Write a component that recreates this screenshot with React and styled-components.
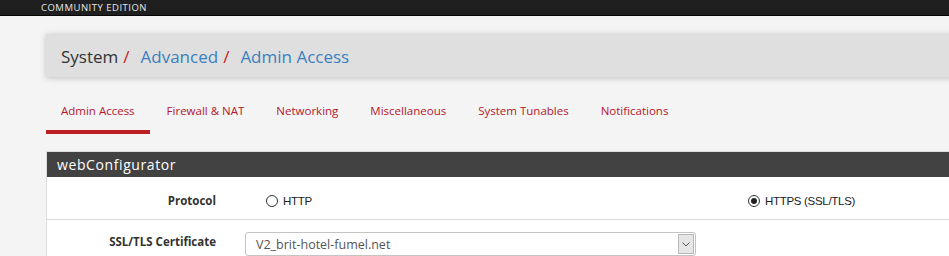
import React from "react";
import styled, { createGlobalStyle } from "styled-components";

const GlobalStyle = createGlobalStyle`
  html, body {
    margin: 0;
    padding: 0;
    background: #f4f4f4;
    overflow: hidden;
    font-family: "Open Sans", "Noto Sans", sans-serif;
  }
`;

const TopBar = styled.div`
  height: 15px;
  background: #1f1f1f;
  border-bottom: 1px solid #050505;
  display: flex;
  align-items: center;
  padding-left: 41px;
`;

const Edition = styled.span`
  color: #e6e6e6;
  font-size: 9.5px;
  letter-spacing: 0.5px;
  line-height: 15px;
`;

const Container = styled.div`
  margin-left: 46px;
  width: 1120px;
`;

const Breadcrumb = styled.div`
  margin-top: 18px;
  height: 43px;
  background: #dfdfdf;
  box-shadow: 0 1px 6px rgba(0, 0, 0, 0.22);
  display: flex;
  align-items: center;
  padding-left: 15px;
  padding-top: 1px;
  box-sizing: border-box;
  font-size: 17px;
  color: #333;
`;

const Crumb = styled.span`
  color: ${(p) => (p.$link ? "#3a7fc0" : "#333")};
`;

const Slash = styled.span`
  color: #c52026;
  margin: 0 11px 0 5px;
`;

const Tabs = styled.div`
  display: flex;
  gap: 2px;
  margin-top: 21px;
`;

const Tab = styled.div`
  box-sizing: border-box;
  padding: 5px 15px 0;
  height: 36px;
  line-height: 16px;
  font-size: 11.5px;
  color: #b5162a;
  border-bottom: 4px solid ${(p) => (p.$active ? "#bb1f22" : "transparent")};
`;

const Panel = styled.div`
  margin-top: 17px;
  border: 1px solid #dcdcdc;
  background: #fff;
`;

const PanelHeading = styled.div`
  height: 25px;
  background: #424242;
  color: #fff;
  font-size: 14px;
  letter-spacing: 0.6px;
  display: flex;
  align-items: center;
  padding-left: 10px;
`;

const Row = styled.div`
  display: grid;
  grid-template-columns: 169px 1fr;
  align-items: ${(p) => (p.$top ? "start" : "center")};
  min-height: ${(p) => p.$h}px;
  border-bottom: 1px solid #dcdcdc;
`;

const Label = styled.div`
  text-align: right;
  font-weight: 700;
  font-size: 11.5px;
  color: #333;
  padding-top: ${(p) => p.$pt || 0}px;
`;

const Radios = styled.div`
  display: grid;
  grid-template-columns: 482px 300px;
  padding-left: 50px;
  padding-top: 5px;
`;

const RadioLabel = styled.label`
  display: flex;
  align-items: center;
  gap: 5px;
  font-family: "Liberation Sans", Arial, sans-serif;
  font-size: 11.5px;
  color: #222;
  letter-spacing: -0.3px;
`;

const RadioDot = styled.span`
  width: 10px;
  height: 10px;
  border-radius: 50%;
  border: 1px solid #333;
  background: #fff;
  display: inline-flex;
  align-items: center;
  justify-content: center;
  &::after {
    content: "";
    width: 6px;
    height: 6px;
    border-radius: 50%;
    background: ${(p) => (p.$checked ? "#222" : "transparent")};
  }
`;

const Select = styled.div`
  margin-left: 29px;
  margin-top: 12px;
  width: 451px;
  height: 24px;
  box-sizing: border-box;
  border: 1px solid #c4c4c4;
  border-radius: 3px;
  display: flex;
  align-items: center;
  justify-content: space-between;
`;

const SelectText = styled.span`
  padding-left: 10px;
  font-size: 12.5px;
  color: #555;
`;

const Arrow = styled.span`
  width: 16px;
  height: 20px;
  margin-right: 1px;
  background: #e6e6e6;
  border: 1px solid #b8b8b8;
  box-sizing: border-box;
  display: flex;
  align-items: center;
  justify-content: center;
`;

const tabs = [
  "Admin Access",
  "Firewall & NAT",
  "Networking",
  "Miscellaneous",
  "System Tunables",
  "Notifications",
];

export default function App() {
  return (
    <>
      <GlobalStyle />
      <TopBar>
        <Edition>COMMUNITY EDITION</Edition>
      </TopBar>
      <Container>
        <Breadcrumb>
          <Crumb>System</Crumb>
          <Slash>/</Slash>
          <Crumb $link>Advanced</Crumb>
          <Slash>/</Slash>
          <Crumb $link>Admin Access</Crumb>
        </Breadcrumb>
        <Tabs>
          {tabs.map((t, i) => (
            <Tab key={t} $active={i === 0}>
              {t}
            </Tab>
          ))}
        </Tabs>
        <Panel>
          <PanelHeading>webConfigurator</PanelHeading>
          <Row $h={42}>
            <Label $pt={4}>Protocol</Label>
            <Radios>
              <RadioLabel>
                <RadioDot />
                HTTP
              </RadioLabel>
              <RadioLabel>
                <RadioDot $checked />
                HTTPS (SSL/TLS)
              </RadioLabel>
            </Radios>
          </Row>
          <Row $h={50} $top>
            <Label $pt={14}>SSL/TLS Certificate</Label>
            <Select>
              <SelectText>V2_brit-hotel-fumel.net</SelectText>
              <Arrow>
                <svg width="8" height="5" viewBox="0 0 8 5">
                  <path d="M0.5 0.5 L4 4 L7.5 0.5" fill="none" stroke="#555" strokeWidth="1" />
                </svg>
              </Arrow>
            </Select>
          </Row>
        </Panel>
      </Container>
    </>
  );
}
